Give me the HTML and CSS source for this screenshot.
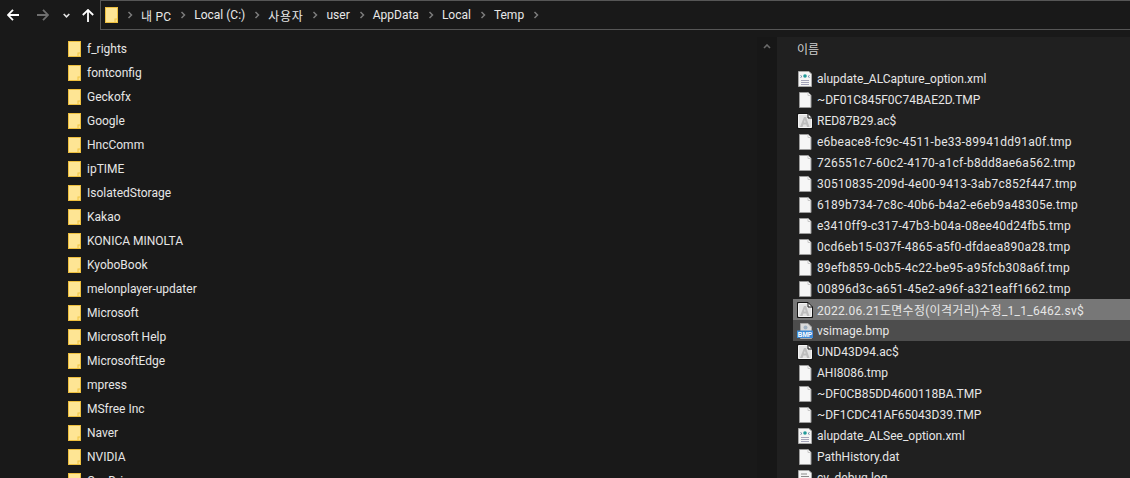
FILE: index.html
```html
<!DOCTYPE html>
<html lang="ko">
<head>
<meta charset="utf-8">
<title>Temp</title>
<link rel="stylesheet" href="styles.css">
</head>
<body>
<svg class="defs" width="0" height="0" aria-hidden="true">
  <defs>
    <symbol id="folder" viewBox="0 0 13 16">
      <rect x="0.5" y="0.5" width="12" height="15" fill="#fee594" stroke="#eebf3e"/>
      <path d="M9.5 15.5V11.5H12.5V15.5Z" fill="#f1c443"/>
      <path d="M10.5 15V12.5H12V15Z" fill="#fde28a"/>
    </symbol>
    <symbol id="file" viewBox="0 0 16 16">
      <path d="M2.5.5H11L14 3.5V15.5H2.5Z" fill="#f6f6f6" stroke="#9c9c9c"/>
      <path d="M11 .5V3.5H14" fill="#fff" stroke="#c8c8c8"/>
    </symbol>
    <symbol id="xml" viewBox="0 0 16 16">
      <path d="M1.5.5H12L14.5 3V15.5H1.5Z" fill="#f4f4f4" stroke="#a8a8a8"/>
      <path d="M5 5.5L3.5 4.5M5 5.5L3.5 6.5M11 5.5L12.5 4.5M11 5.5L12.5 6.5" stroke="#6d8aa6" fill="none"/>
      <circle cx="8" cy="5" r="1.8" fill="#1f9a9a"/>
      <path d="M4 9.5H12M4 11.5H12M4 13.5H12" stroke="#a3a3b8"/>
    </symbol>
    <symbol id="log" viewBox="0 0 16 16">
      <path d="M1.5.5H12L14.5 3V15.5H1.5Z" fill="#f4f4f4" stroke="#a8a8a8"/>
      <path d="M4 4H10M4 6.5H12M4 9H12M4 11.5H12" stroke="#8a8a8a"/>
    </symbol>
    <symbol id="app" viewBox="0 0 16 16">
      <path d="M.5.5H11L15.5 5V15.5H.5Z" fill="#141414"/>
      <path d="M1.5 1.5H10.5L14.5 5.5V14.5H1.5Z" fill="#e2e2e2" stroke="#f4f4f4"/>
      <path d="M11 .5V5H15.5" fill="#fff" stroke="#141414"/>
      <path d="M3 14L7 4H9L12.5 14H10L9.3 11.5H6.4L5.5 14ZM7 9.5H8.7L7.9 6.8Z" fill="#bdbdbd" fill-rule="evenodd"/>
      <path d="M.5.5H11L15.5 5V15.5H.5Z" fill="none" stroke="#141414"/>
    </symbol>
    <symbol id="bmp" viewBox="0 0 16 16">
      <path d="M3.5.5H11L14.5 4V15.5H3.5Z" fill="#dadada" stroke="#a8a8a8"/>
      <circle cx="8.5" cy="4.5" r="2" fill="#9fb0c0"/>
      <rect x="0" y="7.5" width="16" height="7.5" fill="#3d8ad6"/>
      <text x="8" y="13.5" class="bmp-label" text-anchor="middle">BMP</text>
    </symbol>
    <symbol id="sep" viewBox="0 0 6 8">
      <path d="M1.5 1L4.5 4L1.5 7" fill="none" stroke="#7a7a7a" stroke-width="1.5"/>
    </symbol>
  </defs>
</svg>

<div class="window">
  <header class="toolbar">
    <nav class="nav">
      <svg class="nav-icon back" width="12" height="12" viewBox="0 0 12 12"><path d="M6 .8L1 6L6 11.2M1 6H12" fill="none" stroke="#fff" stroke-width="1.8"/></svg>
      <svg class="nav-icon forward" width="12" height="12" viewBox="0 0 12 12"><path d="M6 .8L11 6L6 11.2M11 6H0" fill="none" stroke="#6f6f6f" stroke-width="1.8"/></svg>
      <svg class="nav-icon down" width="7" height="5" viewBox="0 0 7 5"><path d="M.7 1L3.5 3.8L6.3 1" fill="none" stroke="#e4e4e4" stroke-width="1.6"/></svg>
      <svg class="nav-icon up" width="12" height="13" viewBox="0 0 12 13"><path d="M.8 6L6 1L11.2 6M6 1V13" fill="none" stroke="#fff" stroke-width="1.8"/></svg>
    </nav>
    <div class="address">
      <svg class="addr-folder" width="13" height="16"><use href="#folder"/></svg>
      <svg class="sep" width="6" height="8"><use href="#sep"/></svg>
      <span class="crumb crumb-pc">내 PC</span>
      <svg class="sep" width="6" height="8"><use href="#sep"/></svg>
      <span class="crumb">Local (C:)</span>
      <svg class="sep" width="6" height="8"><use href="#sep"/></svg>
      <span class="crumb crumb-ko">사용자</span>
      <svg class="sep" width="6" height="8"><use href="#sep"/></svg>
      <span class="crumb">user</span>
      <svg class="sep" width="6" height="8"><use href="#sep"/></svg>
      <span class="crumb">AppData</span>
      <svg class="sep" width="6" height="8"><use href="#sep"/></svg>
      <span class="crumb">Local</span>
      <svg class="sep" width="6" height="8"><use href="#sep"/></svg>
      <span class="crumb">Temp</span>
      <svg class="sep" width="6" height="8"><use href="#sep"/></svg>
    </div>
  </header>

  <div class="panes">
    <aside class="tree">
      <ul class="tree-list">
        <li class="tree-row"><svg width="13" height="16"><use href="#folder"/></svg><span>f_rights</span></li>
        <li class="tree-row"><svg width="13" height="16"><use href="#folder"/></svg><span>fontconfig</span></li>
        <li class="tree-row"><svg width="13" height="16"><use href="#folder"/></svg><span>Geckofx</span></li>
        <li class="tree-row"><svg width="13" height="16"><use href="#folder"/></svg><span>Google</span></li>
        <li class="tree-row"><svg width="13" height="16"><use href="#folder"/></svg><span>HncComm</span></li>
        <li class="tree-row"><svg width="13" height="16"><use href="#folder"/></svg><span>ipTIME</span></li>
        <li class="tree-row"><svg width="13" height="16"><use href="#folder"/></svg><span>IsolatedStorage</span></li>
        <li class="tree-row"><svg width="13" height="16"><use href="#folder"/></svg><span>Kakao</span></li>
        <li class="tree-row"><svg width="13" height="16"><use href="#folder"/></svg><span>KONICA MINOLTA</span></li>
        <li class="tree-row"><svg width="13" height="16"><use href="#folder"/></svg><span>KyoboBook</span></li>
        <li class="tree-row"><svg width="13" height="16"><use href="#folder"/></svg><span>melonplayer-updater</span></li>
        <li class="tree-row"><svg width="13" height="16"><use href="#folder"/></svg><span>Microsoft</span></li>
        <li class="tree-row"><svg width="13" height="16"><use href="#folder"/></svg><span>Microsoft Help</span></li>
        <li class="tree-row"><svg width="13" height="16"><use href="#folder"/></svg><span>MicrosoftEdge</span></li>
        <li class="tree-row"><svg width="13" height="16"><use href="#folder"/></svg><span>mpress</span></li>
        <li class="tree-row"><svg width="13" height="16"><use href="#folder"/></svg><span>MSfree Inc</span></li>
        <li class="tree-row"><svg width="13" height="16"><use href="#folder"/></svg><span>Naver</span></li>
        <li class="tree-row"><svg width="13" height="16"><use href="#folder"/></svg><span>NVIDIA</span></li>
        <li class="tree-row"><svg width="13" height="16"><use href="#folder"/></svg><span>OneDrive</span></li>
      </ul>
    </aside>
    <div class="scrollbar">
      <svg width="8" height="5" viewBox="0 0 8 5"><path d="M1 4L4 1L7 4" fill="none" stroke="#6a6a6a" stroke-width="1.6"/></svg>
    </div>
    <main class="files">
      <div class="col-head">이름</div>
      <ul class="file-list">
        <li class="file-row"><svg class="fi" width="16" height="16"><use href="#xml"/></svg><span>alupdate_ALCapture_option.xml</span></li>
        <li class="file-row"><svg class="fi" width="16" height="16"><use href="#file"/></svg><span>~DF01C845F0C74BAE2D.TMP</span></li>
        <li class="file-row"><svg class="fi" width="16" height="16"><use href="#app"/></svg><span>RED87B29.ac$</span></li>
        <li class="file-row guid"><svg class="fi" width="16" height="16"><use href="#file"/></svg><span>e6beace8-fc9c-4511-be33-89941dd91a0f.tmp</span></li>
        <li class="file-row guid"><svg class="fi" width="16" height="16"><use href="#file"/></svg><span>726551c7-60c2-4170-a1cf-b8dd8ae6a562.tmp</span></li>
        <li class="file-row guid"><svg class="fi" width="16" height="16"><use href="#file"/></svg><span>30510835-209d-4e00-9413-3ab7c852f447.tmp</span></li>
        <li class="file-row guid"><svg class="fi" width="16" height="16"><use href="#file"/></svg><span>6189b734-7c8c-40b6-b4a2-e6eb9a48305e.tmp</span></li>
        <li class="file-row guid"><svg class="fi" width="16" height="16"><use href="#file"/></svg><span>e3410ff9-c317-47b3-b04a-08ee40d24fb5.tmp</span></li>
        <li class="file-row guid"><svg class="fi" width="16" height="16"><use href="#file"/></svg><span>0cd6eb15-037f-4865-a5f0-dfdaea890a28.tmp</span></li>
        <li class="file-row guid"><svg class="fi" width="16" height="16"><use href="#file"/></svg><span>89efb859-0cb5-4c22-be95-a95fcb308a6f.tmp</span></li>
        <li class="file-row guid"><svg class="fi" width="16" height="16"><use href="#file"/></svg><span>00896d3c-a651-45e2-a96f-a321eaff1662.tmp</span></li>
        <li class="file-row sel-a"><svg class="fi" width="16" height="16"><use href="#app"/></svg><span>2022.06.21도면수정(이격거리)수정_1_1_6462.sv$</span></li>
        <li class="file-row sel-b"><svg class="fi" width="16" height="16"><use href="#bmp"/></svg><span>vsimage.bmp</span></li>
        <li class="file-row"><svg class="fi" width="16" height="16"><use href="#app"/></svg><span>UND43D94.ac$</span></li>
        <li class="file-row"><svg class="fi" width="16" height="16"><use href="#file"/></svg><span>AHI8086.tmp</span></li>
        <li class="file-row"><svg class="fi" width="16" height="16"><use href="#file"/></svg><span>~DF0CB85DD4600118BA.TMP</span></li>
        <li class="file-row"><svg class="fi" width="16" height="16"><use href="#file"/></svg><span>~DF1CDC41AF65043D39.TMP</span></li>
        <li class="file-row"><svg class="fi" width="16" height="16"><use href="#xml"/></svg><span>alupdate_ALSee_option.xml</span></li>
        <li class="file-row"><svg class="fi" width="16" height="16"><use href="#file"/></svg><span>PathHistory.dat</span></li>
        <li class="file-row"><svg class="fi" width="16" height="16"><use href="#log"/></svg><span>cv_debug.log</span></li>
      </ul>
    </main>
  </div>
</div>
</body>
</html>
```

FILE: styles.css
```css
* { box-sizing: border-box; }
html, body { margin: 0; padding: 0; height: 100%; overflow: hidden; }
body {
  background: #191919;
  color: #fff;
  font-family: Roboto, "Noto Sans CJK KR", sans-serif;
  font-size: 12px;
}
.defs { display: block; height: 0; }
ul { list-style: none; margin: 0; padding: 0; }
svg { flex: none; display: block; }
.bmp-label { font: bold 6.5px "Liberation Sans", sans-serif; fill: #fff; }

.window { width: 1130px; height: 478px; display: flex; flex-direction: column; overflow: hidden; }

.toolbar { display: flex; height: 30px; flex: none; }
.nav { width: 100px; flex: none; display: flex; align-items: center; padding-left: 7px; }
.forward { margin-left: 18px; }
.down { margin-left: 14px; }
.up { margin-left: 12px; }
.address {
  flex: 1;
  height: 30px;
  border: 1px solid #565656;
  border-right: 0;
  display: flex;
  align-items: center;
  padding-left: 4px;
  color: #e8e8e8;
}
.sep { margin: 0 8px 0 9px; }
.crumb { white-space: nowrap; }
.crumb-pc { letter-spacing: 0.2px; }
.crumb-ko { letter-spacing: 0.7px; }

.panes { flex: 1; display: flex; min-height: 0; padding-top: 7px; }
.tree { width: 757px; flex: none; padding-left: 68px; overflow: hidden; }
.tree-row { height: 24px; display: flex; align-items: center; gap: 6px; color: #e6e6e6; white-space: nowrap; }
.scrollbar { width: 20px; flex: none; background: #171717; padding: 7px 0 0 6px; }
.files { flex: 1; background: #202020; padding-left: 16px; overflow: hidden; }
.col-head { height: 25px; padding: 3px 0 0 4px; color: #cfcfcf; }
.file-list { padding-top: 6px; }
.file-row { height: 21px; display: flex; align-items: center; gap: 4px; color: #e6e6e6; white-space: nowrap; padding-left: 4px; }
.guid { letter-spacing: 0.25px; }
.sel-a { background: #777777; letter-spacing: 0.27px; }
.sel-b { background: #4d4d4d; }
```
